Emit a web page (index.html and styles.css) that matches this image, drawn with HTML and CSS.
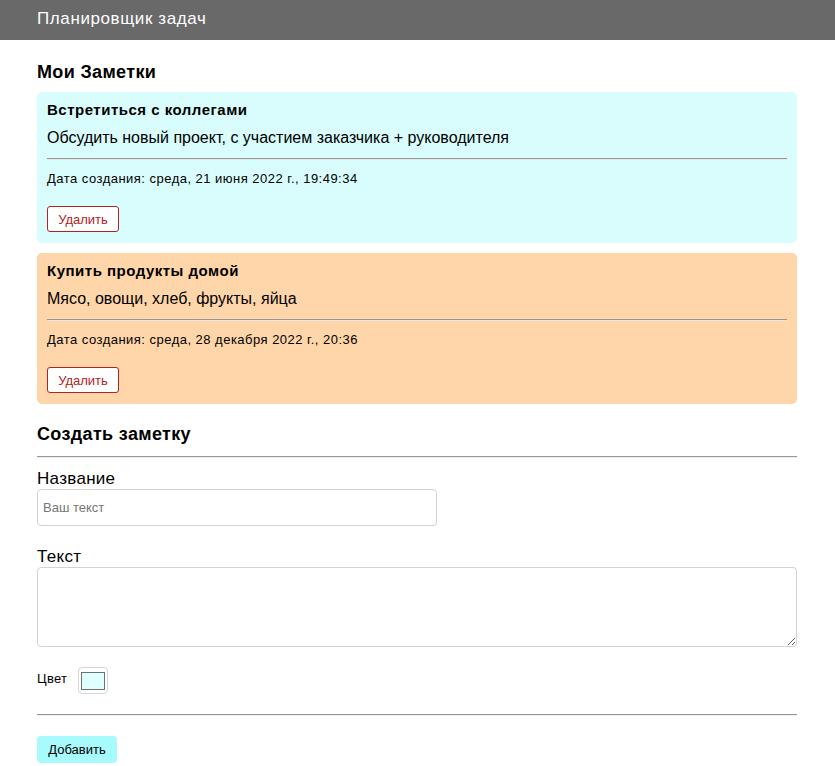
FILE: index.html
```html
<!DOCTYPE html>
<html lang="ru">
<head>
<meta charset="utf-8">
<title>Планировщик задач</title>
<link rel="stylesheet" href="styles.css">
</head>
<body>
<header class="topbar">
  <span class="brand">Планировщик задач</span>
</header>
<main class="page">
  <h2 class="section-title">Мои Заметки</h2>
  <div class="notes">
    <div class="note note-cyan">
      <div class="note-title">Встретиться с коллегами</div>
      <div class="note-text">Обсудить новый проект, с участием заказчика + руководителя</div>
      <hr class="note-hr">
      <div class="note-date">Дата создания: среда, 21 июня 2022 г., 19:49:34</div>
      <button class="btn-delete">Удалить</button>
    </div>
    <div class="note note-peach">
      <div class="note-title">Купить продукты домой</div>
      <div class="note-text">Мясо, овощи, хлеб, фрукты, яйца</div>
      <hr class="note-hr">
      <div class="note-date">Дата создания: среда, 28 декабря 2022 г., 20:36</div>
      <button class="btn-delete">Удалить</button>
    </div>
  </div>
  <h2 class="section-title create-title">Создать заметку</h2>
  <hr class="form-hr">
  <form class="form">
    <label class="field-label">Название</label>
    <input class="input-title" type="text" placeholder="Ваш текст">
    <label class="field-label label-text">Текст</label>
    <textarea class="input-text"></textarea>
    <div class="color-row">
      <span class="color-label">Цвет</span>
      <span class="color-box"><span class="color-swatch"></span></span>
    </div>
    <hr class="form-hr bottom-hr">
    <button type="button" class="btn-add">Добавить</button>
  </form>
</main>
</body>
</html>
```

FILE: styles.css
```css
* { box-sizing: border-box; }
html, body { margin: 0; padding: 0; }
body {
  font-family: "Liberation Sans", Arial, sans-serif;
  color: #000;
  background: #fff;
}
.topbar {
  height: 40px;
  background: #696969;
  display: flex;
  align-items: center;
  padding: 0 37px;
}
.brand {
  color: #fff;
  font-size: 17px;
  letter-spacing: 0.6px;
  position: relative;
  top: -1px;
}
.page {
  padding: 0 38px 0 37px;
}
.section-title {
  font-size: 18px;
  font-weight: bold;
  letter-spacing: 0.35px;
  margin: 21px 0 9px;
  line-height: 22px;
}
.notes {
  display: flex;
  flex-direction: column;
  gap: 10px;
}
.note {
  border-radius: 5px;
  padding: 9px 10px 10px;
  height: 151px;
}
.note-cyan { background: #d9fdfd; }
.note-peach { background: #ffd6a9; }
.note-title {
  font-size: 15px;
  font-weight: bold;
  letter-spacing: 0.5px;
  line-height: 18px;
}
.note-text {
  font-size: 16px;
  line-height: 20px;
  margin-top: 9px;
}
.note-hr {
  margin: 10px 0 0;
  border: 0;
  border-top: 1px solid #979797;
  border-bottom: 1px solid #e8e8e8;
  height: 0;
}
.note-date {
  font-size: 13px;
  letter-spacing: 0.48px;
  line-height: 16px;
  margin-top: 11px;
}
.btn-delete {
  margin-top: 19px;
  display: block;
  width: 72px;
  height: 26px;
  background: #fff;
  border: 1px solid #b22222;
  border-radius: 3px;
  color: #b22222;
  font-family: "Liberation Sans", Arial, sans-serif;
  font-size: 13px;
  padding: 0;
}
.create-title {
  margin-top: 19px;
  margin-bottom: 0;
}
.form-hr {
  margin: 11px 0 0;
  border: 0;
  border-top: 1px solid #979797;
  border-bottom: 1px solid #eee;
  height: 0;
}
.form {
  display: flex;
  flex-direction: column;
  align-items: flex-start;
}
.field-label {
  font-size: 17px;
  letter-spacing: 0.3px;
  line-height: 20px;
  margin-top: 11px;
}
.label-text { margin-top: 21px; }
.input-title {
  width: 400px;
  height: 37px;
  border: 1px solid #d3d3d3;
  border-radius: 4px;
  margin: 0;
  padding: 0 5px;
  font-family: "Liberation Sans", Arial, sans-serif;
  font-size: 13px;
}
.input-title::placeholder { color: #777; }
.input-text {
  width: 100%;
  height: 80px;
  margin: 0;
  border: 1px solid #d3d3d3;
  border-radius: 4px;
  resize: vertical;
  display: block;
}
.color-row {
  display: flex;
  align-items: center;
  gap: 11px;
  margin-top: 20px;
}
.color-label {
  font-size: 13px;
  letter-spacing: 0.3px;
  position: relative;
  top: -2px;
}
.color-box {
  width: 30px;
  height: 27px;
  border: 1px solid #d6d6d6;
  border-radius: 4px;
  background: #fff;
  display: flex;
  align-items: center;
  justify-content: center;
}
.color-swatch {
  width: 24px;
  height: 18px;
  background: #e0ffff;
  border: 1px solid #707070;
}
.bottom-hr {
  width: 100%;
  margin-top: 20px;
}
.btn-add {
  margin-top: 20px;
  width: 80px;
  height: 27px;
  background: #a8fbfd;
  border: 0;
  border-radius: 4px;
  font-family: "Liberation Sans", Arial, sans-serif;
  font-size: 13px;
  color: #000;
  padding: 0;
}
```
